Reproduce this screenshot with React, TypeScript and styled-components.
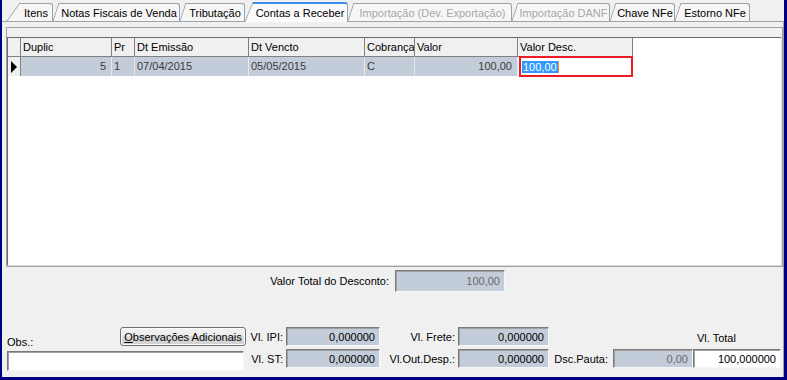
import styled, { createGlobalStyle } from "styled-components";

const GlobalStyle = createGlobalStyle`
    html, body {
        margin: 0;
        padding: 0;
        background: #f0f0f0;
    }
    body {
        font-family: "Liberation Sans", Arial, sans-serif;
        font-size: 11px;
        color: #000;
    }
    * {
        box-sizing: border-box;
    }
`;

interface ITab {
    label: string;
    width: number;
    slope: number;
    active?: boolean;
    disabled?: boolean;
}

const TABS: ITab[] = [
    { label: "Itens", width: 46, slope: 13 },
    { label: "Notas Fiscais de Venda", width: 127, slope: 6 },
    { label: "Tributação", width: 65, slope: 6 },
    { label: "Contas a Receber", width: 103, slope: 8, active: true },
    { label: "Importação (Dev. Exportação)", width: 164, slope: 6, disabled: true },
    { label: "Importação DANF", width: 98, slope: 6, disabled: true },
    { label: "Chave NFe", width: 65, slope: 6 },
    { label: "Estorno NFe", width: 75, slope: 6 },
];

const COLUMNS = [13, 91, 23, 114, 116, 50, 103, 115];

const App = () => {
    return <>
        <GlobalStyle />
        <Frame>
            <TabStrip>
                {TABS.map(t => (
                    <Tab key={t.label} $width={t.width} $slope={t.slope} $active={t.active}>
                        <TabFace $active={t.active} $disabled={t.disabled}>{t.label}</TabFace>
                    </Tab>
                ))}
            </TabStrip>
            <Page>
                <GridPanel>
                    <Band />
                    <Grid>
                        <HeaderRow>
                            <HeaderCell />
                            <HeaderCell>Duplic</HeaderCell>
                            <HeaderCell>Pr</HeaderCell>
                            <HeaderCell>Dt Emissão</HeaderCell>
                            <HeaderCell>Dt Vencto</HeaderCell>
                            <HeaderCell>Cobrança</HeaderCell>
                            <HeaderCell>Valor</HeaderCell>
                            <HeaderCell>Valor Desc.</HeaderCell>
                        </HeaderRow>
                        <DataRow>
                            <IndicatorCell><Arrow /></IndicatorCell>
                            <DataCell $right>5</DataCell>
                            <DataCell>1</DataCell>
                            <DataCell>07/04/2015</DataCell>
                            <DataCell>05/05/2015</DataCell>
                            <DataCell>C</DataCell>
                            <DataCell $right>100,00</DataCell>
                            <EditCell><Selected>100,00</Selected></EditCell>
                        </DataRow>
                    </Grid>
                </GridPanel>

                <SummaryRow>
                    <Label>Valor Total do Desconto:</Label>
                    <Field $muted $height={22}>100,00</Field>
                </SummaryRow>

                <Totals>
                    <ObsHead>
                        <ObsLabel>Obs.:</ObsLabel>
                        <Button><u>O</u>bservações Adicionais</Button>
                    </ObsHead>
                    <Label>Vl. IPI:</Label>
                    <Field>0,000000</Field>
                    <Label>Vl. Frete:</Label>
                    <Field>0,000000</Field>
                    <span />
                    <span />
                    <TotalLabel>Vl. Total</TotalLabel>

                    <ObsInput />
                    <Label>Vl. ST:</Label>
                    <Field>0,000000</Field>
                    <Label>Vl.Out.Desp.:</Label>
                    <Field>0,000000</Field>
                    <Label $pad={5}>Dsc.Pauta:</Label>
                    <Field $muted>0,00</Field>
                    <Field $white>100,000000</Field>
                </Totals>
            </Page>
        </Frame>
    </>;
};

const Frame = styled.div`
    width: 787px;
    height: 380px;
    border-style: solid;
    border-color: #000080;
    border-width: 0 3px 3px 2px;
    background: #f0f0f0;
    display: flex;
    flex-direction: column;
    overflow: hidden;
`;

const TabStrip = styled.div`
    height: 21px;
    display: flex;
    align-items: flex-end;
    padding-left: 5px;
    position: relative;
    z-index: 1;
`;

const Tab = styled.div<{ $width: number; $slope: number; $active?: boolean }>`
    position: relative;
    width: ${p => p.$width}px;
    height: ${p => p.$active ? 20 : 18}px;
    margin-bottom: ${p => p.$active ? -1 : 0}px;
    padding-left: ${p => p.$slope}px;
    display: flex;
    &::before {
        content: "";
        position: absolute;
        left: 0;
        top: 0;
        bottom: 0;
        width: ${p => p.$slope}px;
        background: linear-gradient(to bottom right,
            transparent calc(50% - 0.8px),
            #9ba3ab 50%,
            ${p => p.$active ? "#fbfbfb" : "#f6f6f6"} calc(50% + 0.8px));
    }
`;

const TabFace = styled.div<{ $active?: boolean; $disabled?: boolean }>`
    flex: 1;
    display: flex;
    align-items: center;
    justify-content: center;
    white-space: nowrap;
    background: ${p => p.$active ? "#fbfbfb" : "#f6f6f6"};
    border-top: ${p => p.$active ? "2px solid #3d8ee8" : "1px solid #9ba3ab"};
    border-right: 1px solid #9ba3ab;
    border-top-right-radius: 3px;
    color: ${p => p.$disabled ? "#a7a7a7" : "#000"};
    padding-top: ${p => p.$active ? 0 : 1}px;
`;

const Page = styled.div`
    flex: 1;
    border-top: 1px solid #9ba3ab;
    border-right: 1px solid #9ba3ab;
    padding: 5px 0 0 4px;
    display: flex;
    flex-direction: column;
`;

const GridPanel = styled.div`
    height: 240px;
    border: 1px solid #a0a0a0;
    box-shadow: inset -1px -1px 0 #dcdcdc;
    display: flex;
    flex-direction: column;
`;

const Band = styled.div`
    height: 9px;
    background: #f0f0f0;
`;

const Grid = styled.div`
    flex: 1;
    background: #fff;
    border-top: 1px solid #696969;
    border-left: 1px solid #696969;
    margin-bottom: 1px;
    margin-right: 1px;
`;

const HeaderRow = styled.div`
    display: grid;
    grid-template-columns: ${COLUMNS.map(c => c + "px").join(" ")};
    height: 19px;
    border-bottom: 1px solid #808080;
    width: ${COLUMNS.reduce((a, b) => a + b, 0)}px;
`;

const HeaderCell = styled.div`
    background: #f0f0f0;
    border-right: 1px solid #808080;
    padding-left: 2px;
    line-height: 18px;
    white-space: nowrap;
    overflow: hidden;
`;

const DataRow = styled.div`
    display: grid;
    grid-template-columns: ${COLUMNS.map(c => c + "px").join(" ")};
    height: 19px;
    width: ${COLUMNS.reduce((a, b) => a + b, 0)}px;
`;

const IndicatorCell = styled.div`
    background: #f0f0f0;
    border-right: 1px solid #808080;
    display: flex;
    align-items: center;
    padding-left: 3px;
`;

const Arrow = styled.div`
    width: 0;
    height: 0;
    border-left: 6px solid #000;
    border-top: 6px solid transparent;
    border-bottom: 6px solid transparent;
`;

const DataCell = styled.div<{ $right?: boolean }>`
    background: #c3cdd9;
    border-right: 1px solid #e6eaef;
    color: #3c3c3c;
    line-height: 19px;
    padding: 0 5px 0 2px;
    text-align: ${p => p.$right ? "right" : "left"};
    white-space: nowrap;
`;

const EditCell = styled.div`
    position: relative;
    z-index: 1;
    margin: -1px 0 -1px 1px;
    background: #fff;
    border: 2px solid #ec1c24;
    display: flex;
    align-items: center;
    padding-left: 1px;
`;

const Selected = styled.span`
    background: #3399ff;
    color: #fff;
    line-height: 12px;
    padding: 0 1px;
    border-right: 1px solid #e08a2c;
`;

const SummaryRow = styled.div`
    display: grid;
    grid-template-columns: 386px 110px;
    column-gap: 3px;
    align-items: center;
    margin-top: 3px;
`;

const Label = styled.div<{ $pad?: number }>`
    text-align: right;
    white-space: nowrap;
    padding-right: ${p => p.$pad ?? 3}px;
    align-self: center;
`;

const Field = styled.div<{ $muted?: boolean; $white?: boolean; $height?: number }>`
    height: ${p => p.$height ?? 19}px;
    background: ${p => p.$white ? "#fff" : "#c3cdd9"};
    color: ${p => p.$muted ? "#6a6a6a" : "#000"};
    border: 1px solid;
    border-color: #7a7a7a #f7f7f7 #f7f7f7 #7a7a7a;
    box-shadow: inset 1px 1px 0 #a0a0a0;
    text-align: right;
    padding: 0 4px 0 2px;
    display: flex;
    align-items: center;
    justify-content: flex-end;
`;

const Totals = styled.div`
    display: grid;
    grid-template-columns: 240px 40px 94px 78px 91px 64px 80px 88px;
    grid-template-rows: 19px 19px;
    row-gap: 3px;
    margin-top: 35px;
`;

const ObsHead = styled.div`
    display: flex;
    align-items: flex-end;
    justify-content: space-between;
`;

const ObsLabel = styled.span`
    padding-left: 1px;
    line-height: 13px;
    margin-bottom: -3px;
`;

const Button = styled.button`
    width: 126px;
    height: 19px;
    padding: 0;
    margin: 0;
    font: inherit;
    color: #000;
    border: 1px solid #707070;
    border-radius: 3px;
    background: linear-gradient(#f2f2f2, #ebebeb 50%, #dddddd 50%, #cfcfcf);
    box-shadow: inset 0 0 0 1px #fcfcfc;
    u {
        text-decoration: underline;
    }
`;

const ObsInput = styled.div`
    height: 20px;
    width: 237px;
    margin-left: 1px;
    margin-top: 2px;
    background: #fff;
    border: 1px solid;
    border-color: #7a7a7a #f7f7f7 #f7f7f7 #7a7a7a;
    box-shadow: inset 1px 1px 0 #a0a0a0;
`;

const TotalLabel = styled.div`
    padding-left: 4px;
    align-self: center;
    padding-top: 3px;
`;

export default App;
